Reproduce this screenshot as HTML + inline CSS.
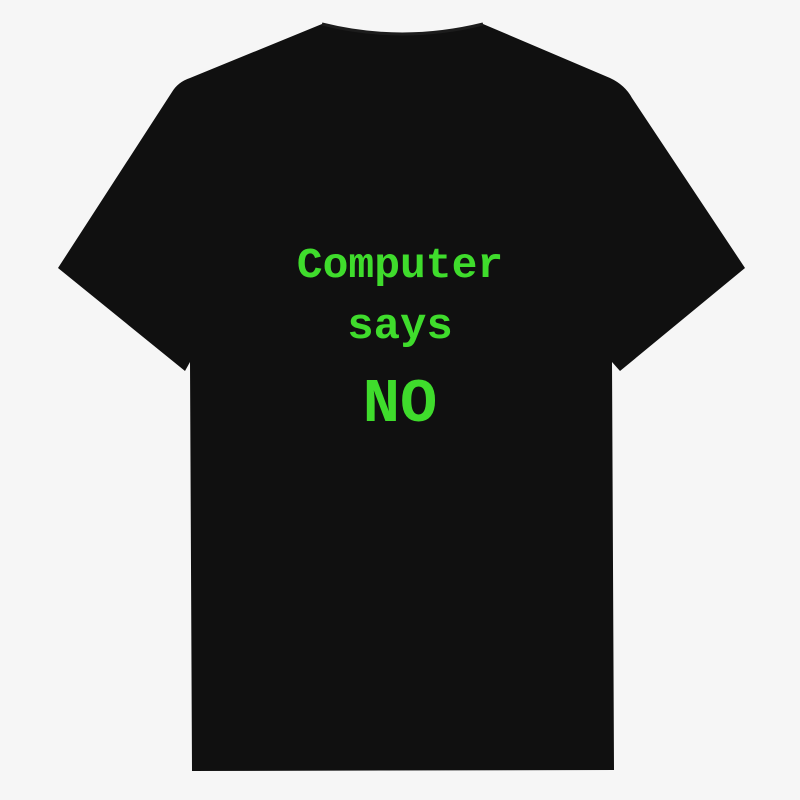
<!DOCTYPE html>
<html><head><style>
html,body{margin:0;padding:0;background:#f6f6f6;width:800px;height:800px;overflow:hidden}
.t{position:absolute;left:0;width:800px;text-align:center;font-family:"Liberation Mono",monospace;font-weight:bold;color:#3fdc2c;letter-spacing:0}
</style></head><body>
<svg width="800" height="800" style="position:absolute;left:0;top:0">
<path d="M322,24 Q402,44 483,24 L610,78 Q625,85 632,98 L745,268 L620,371 L612,362 L614,770 L192,771 L190,362 L185,371 L58,268 L172,92 Q178,82 190,78 Z" fill="#101010"/>
<path d="M322,24 Q402,44 483,24" stroke="#1c1c1c" stroke-width="3" fill="none"/>
</svg>
<div class="t" style="top:244px;font-size:43px;line-height:44px">Computer</div>
<div class="t" style="top:305px;font-size:44px;line-height:44px">says</div>
<div class="t" style="top:374px;font-size:62px;line-height:62px">NO</div>
</body></html>
